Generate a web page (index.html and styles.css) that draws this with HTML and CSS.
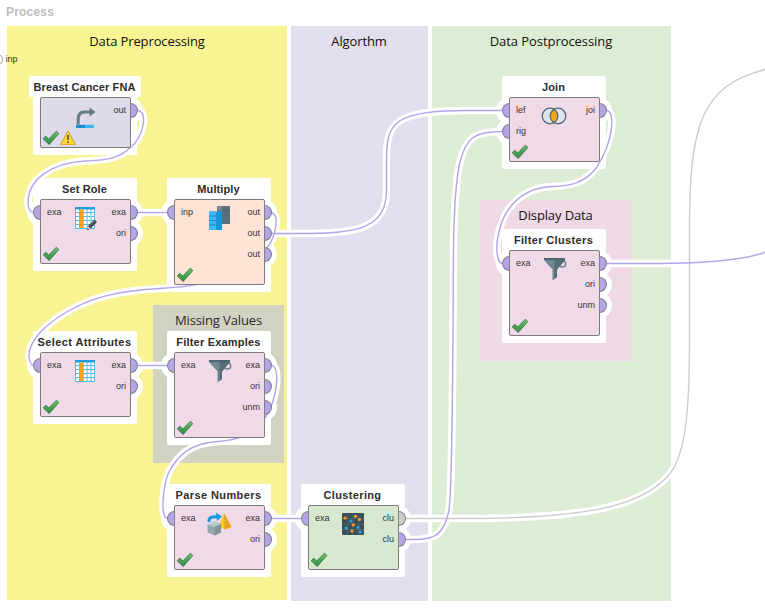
FILE: index.html
```
<!DOCTYPE html>
<html lang="en">
<head>
<meta charset="utf-8">
<title>Process</title>
<link rel="stylesheet" href="styles.css">
</head>
<body>
<header class="title">Process</header>
<main class="columns">
  <section class="column pre"><h2>Data Preprocessing</h2></section>
  <section class="column algo"><h2>Algorthm</h2></section>
  <section class="column post"><h2>Data Postprocessing</h2></section>
</main>
<section class="note missing"><h2>Missing Values</h2></section>
<section class="note display"><h2>Display Data</h2></section>
<svg class="wires" width="765" height="613" viewBox="0 0 765 613" id="wires">
  <defs>
    <g id="connections">
      <path d="M138 110.500C148 112 144 136 130 148C117 160 103 160 85 161C50 163 28 180 28 203C28 208 30 212 33 212.500"/>
      <path d="M138 212.500H167"/>
      <path d="M271 212.500C280 214 276 236 267 248C247 274 220 285 160 288.500C120 291 96 296 72 309C48 322 28 340 29 357C30 363 31 365 33 365.500"/>
      <path d="M272 233.500H290C350 233.500 386.500 233 386.500 190V160C386.500 122 394 110.500 470 110.500H502"/>
      <path d="M138 365.500H167"/>
      <path d="M272 365.500C280 367 278 398 265 418C254 434 240 440 218 441.500C190 443 178 456 169.500 471C163 484 160 516 167 518.500"/>
      <path d="M272 518.500H301"/>
      <path class="idle" d="M406 518.500H480C585 517 640 507 668 476C686 456 689.500 410 689.500 340V230C689.500 125 701 86 765 69.500"/>
      <path d="M406 539.500C432 539.500 443 539 449 510C453 485 453 300 453.500 250C454 205 457 175 460 162C466 138 474 131.500 502 131.500"/>
      <path d="M607 110.500C615 112 614 140 597 167C585 183 570 186 553 186.500C532 187 518 196 508 210C500 222 496 240 497 252C498 260 499 263 502 263.500"/>
      <path d="M607 263.500H640C700 263.500 740 261 765 252.500"/>
    </g>
    <linearGradient id="tick" x1="0" y1="0" x2="0" y2="1"><stop offset="0" stop-color="#6cc472"/><stop offset="1" stop-color="#2f8b42"/></linearGradient>
    <symbol id="check" viewBox="0 0 18 16"><path d="M1.200 8.800L3.800 6.200L6.800 9L14.400 1.200L16.800 3.500L7.200 14.500Z" fill="url(#tick)" stroke="#30783c" stroke-width=".9"/></symbol>
    <symbol id="warning" viewBox="0 0 18 16"><path d="M9 1.200L16.500 14.500H1.500Z" fill="#fbd63a" stroke="#dca72e" stroke-width="1.200" stroke-linejoin="round"/><path d="M9 5V10M9 11.500V13" stroke="#4b4a3b" stroke-width="1.500"/></symbol>
    <symbol id="retrieve" viewBox="0 0 24 24"><path d="M4.200 20.500V15.500Q4.200 8 10.500 8H16" fill="none" stroke="#657b85" stroke-width="3"/><path d="M15.500 3.500L21.500 8L15.500 12.500Z" fill="#657b85"/><path d="M2 20.800H11V24H2Z" fill="#1a8ed4"/><path d="M11 20.800H20V24H11Z" fill="#3db5ef"/></symbol>
    <symbol id="table" viewBox="0 0 24 24"><path d="M1 1H21V23H1Z" fill="#fff"/><path d="M1.500 3V22.500H20.500V3M1 6.500H21M1 10.500H21M1 14.500H21M1 18.500H21M5.500 3V23M9 3V23M13 3V23M17 3V23" fill="none" stroke="#55baea"/><path d="M1 1H21V3.500H1Z" fill="#229fdc"/><path d="M5 3.500H9.500V22H5Z" fill="#ffa51d"/><path d="M5 7H9.500M5 11H9.500M5 15H9.500M5 19H9.500" stroke="#ee9315"/></symbol>
    <symbol id="role" viewBox="0 0 24 24"><use href="#table"/><path d="M13 24L14 20L20.500 13.500L23 16L16.500 22.500Z" fill="#3c444c"/><path d="M13 24L14 20L16.500 22.500Z" fill="#e5c8cd"/><path d="M13 24L14 22.500L15 23.500Z" fill="#222"/><path d="M16 19.500L20.500 15" stroke="#7b8185"/></symbol>
    <symbol id="copy" viewBox="0 0 24 24"><path d="M9 0H22V18H9Z" fill="#5c707c"/><path d="M9 0H14V18H9Z" fill="#788b95"/><path d="M9 4.500H22M9 9H22M9 13.500H22" stroke="#506570" stroke-width=".7"/><path d="M1 5.500H14V24H1Z" fill="#1695d9"/><path d="M1 5.500H8V24H1Z" fill="#3fb9f1"/><path d="M1 10H8M1 14.500H8M1 19H8" stroke="#1682bf" stroke-width=".8"/></symbol>
    <symbol id="filter" viewBox="0 0 24 24"><ellipse cx="19.500" cy="7" rx="3.200" ry="3" fill="none" stroke="#6d8590" stroke-width="1.500"/><path d="M1 1H22V3L14 12.500V20L9.500 23.500V12.500L1 3Z" fill="#718791"/><path d="M11.500 3H22L14 12.500V20L11.500 22Z" fill="#566d79"/><path d="M1 1H22V3H1Z" fill="#4e6470"/></symbol>
    <symbol id="parse" viewBox="0 0 26 24"><path d="M18 1L25.500 15L18.500 17.500L12.500 14Z" fill="#fbc831"/><path d="M18 1L25.500 15L18.500 17.500Z" fill="#e9a624"/><path d="M3 10V8Q4 4 12 5" fill="none" stroke="#1699dc" stroke-width="3"/><path d="M10 .5L16 4.500L11 9Z" fill="#1699dc"/><path d="M1.500 12.500L9 9.500L15 12V20.500L8.500 23.500L1.500 20.500Z" fill="#96a8ae"/><path d="M1.500 12.500L9 9.500L15 12L8.500 15Z" fill="#bacbd0"/><path d="M8.500 15L15 12V20.500L8.500 23.500Z" fill="#81959d"/></symbol>
    <symbol id="cluster" viewBox="0 0 24 24"><rect x="1" y="1" width="22" height="22" rx="1" fill="#3a4e59"/><path d="M1 6.500H23M1 12H23M1 17.500H23M6.500 1V23M12 1V23M17.500 1V23" stroke="#4a606b"/><g fill="#ff9d22"><circle cx="4" cy="6" r="1.600"/><circle cx="14.500" cy="4.300" r="1.600"/><circle cx="18.500" cy="7.500" r="1.600"/><circle cx="12.300" cy="12.800" r="1.600"/><circle cx="11" cy="19" r="1.600"/></g><g fill="#27a6e9"><circle cx="10" cy="9" r="1.600"/><circle cx="5.200" cy="16" r="1.600"/><circle cx="17" cy="15.500" r="1.600"/><circle cx="19.300" cy="20" r="1.600"/></g></symbol>
    <symbol id="join" viewBox="0 0 26 20"><circle cx="9" cy="10" r="7.500" fill="#dce6ea"/><circle cx="17" cy="10" r="7.500" fill="#dce6ea"/><path d="M13 3.600A7.500 7.500 0 0 1 13 16.400A7.500 7.500 0 0 1 13 3.600" fill="#ffa414"/><g fill="none" stroke="#526a76" stroke-width="1.300"><circle cx="9" cy="10" r="7.800"/><circle cx="17" cy="10" r="7.800"/></g></symbol>
  </defs>
  <g id="plates" fill="#fff"></g>
  <use class="halo" href="#connections"/>
  <use class="wire" href="#connections"/>
  <circle cx="-2" cy="59.500" r="4.700" fill="#fff" stroke="#b5b5b5" stroke-width="1.300"/>
</svg>
<span class="source">inp</span>
<div id="nodes"></div>
<script src="nodes.js"></script>
</body>
</html>
```
FILE: styles.css
```
* { box-sizing: border-box; }
body {
  position: relative;
  margin: 0;
  width: 765px;
  height: 613px;
  overflow: hidden;
  background: #fff;
  font-family: "Liberation Sans", Arial, sans-serif;
}
.title {
  height: 26px;
  padding: 4px 0 0 6px;
  font-size: 12px;
  line-height: 16px;
  font-weight: bold;
  letter-spacing: .2px;
  color: #bcbcbc;
}
.columns {
  display: flex;
  gap: 4px;
  padding-left: 7px;
}
.column { height: 575px; padding-top: 6px; }
.pre { width: 280px; height: 574px; background: #f8f494; }
.algo { width: 137px; padding-right: 1px; background: #e2deee; }
.post { width: 239px; padding-right: 1px; background: #dcecd5; }
h2 {
  margin: 0;
  font: 400 13px/18px "Open Sans", "Noto Sans", sans-serif;
  letter-spacing: -.12px;
  text-align: center;
  color: #111;
}
.post h2 { letter-spacing: -.06px; }
.note { position: absolute; padding-top: 6px; }
.missing { left: 153px; top: 305px; width: 131px; height: 158px; background: #d1d2c2; }
.missing h2 { color: #2a2a2a; }
.display { left: 479px; top: 200px; width: 153px; height: 161px; background: #efd9e4; }
.wires { position: absolute; left: 0; top: 0; }
.halo { --idle: #fff; fill: none; stroke: #fff; stroke-width: 7.5; }
.wire { --idle: #ccc; fill: none; stroke: #b4a4e9; stroke-width: 1.4; }
.idle { stroke: var(--idle); }
.source {
  position: absolute;
  left: 5.5px;
  top: 53px;
  font-size: 9px;
  line-height: 12px;
  color: #333;
}
.node { position: absolute; width: 91px; }
.name {
  position: absolute;
  left: -12px;
  right: -10px;
  top: -17px;
  font-size: 11px;
  line-height: 15px;
  font-weight: bold;
  text-align: center;
  white-space: nowrap;
  color: #2c2c2c;
}
.box {
  height: 100%;
  border: 1px solid #7e7b80;
  border-radius: 2px;
  background: #f1dae7;
}
.violet { background: #dedaea; }
.peach { background: #fee4d7; }
.green { background: #d8e8cf; }
.ports {
  position: absolute;
  top: 3px;
  display: flex;
  flex-direction: column;
  font-size: 9px;
  line-height: 21px;
  color: #333;
}
.in { left: -7px; }
.out { right: -7px; text-align: right; }
.port { display: flex; align-items: center; gap: 6px; height: 21px; }
.out .port { flex-direction: row-reverse; gap: 4px; }
.port i {
  width: 8px;
  height: 15px;
  border: 1.5px solid #858087;
  background: #b4a4e8;
}
.in i { border-radius: 8px 0 0 8px; }
.out i { border-radius: 0 8px 8px 0; }
.port .unused { background: #ccc; }
.icon { position: absolute; left: 34px; top: 7px; }
.icon.cluster { left: 33px; }
.icon.parse { left: 32px; }
.icon.filter { left: 33.5px; }
.icon.join { left: 32px; top: 9px; }
.status { position: absolute; left: 2px; bottom: 2px; display: flex; }
.status svg + svg { margin-left: -1px; }
```
FILE: nodes.js
```
const NODES = [
  { name: "Breast Cancer FNA", spacing: 0.1, x: 40, y: 97, h: 51, tint: "violet", icon: "retrieve", in: [], out: ["out"], warn: true },
  { name: "Set Role", spacing: 0.12, x: 40, y: 199, h: 65, icon: "role", in: ["exa"], out: ["exa", "ori"] },
  { name: "Multiply", spacing: 0.1, x: 174, y: 199, h: 86, tint: "peach", icon: "copy", in: ["inp"], out: ["out", "out", "out"] },
  { name: "Select Attributes", spacing: 0.4, x: 40, y: 352, h: 65, icon: "table", in: ["exa"], out: ["exa", "ori"] },
  { name: "Filter Examples", spacing: 0.2, x: 174, y: 352, h: 86, icon: "filter", in: ["exa"], out: ["exa", "ori", "unm"] },
  { name: "Parse Numbers", spacing: 0.4, x: 174, y: 505, h: 65, icon: "parse", in: ["exa"], out: ["exa", "ori"] },
  { name: "Clustering", spacing: 0.35, x: 308, y: 505, h: 65, tint: "green", icon: "cluster", in: ["exa"], out: ["clu", "clu"], unused: true },
  { name: "Join", spacing: 0.12, x: 509, y: 97, h: 65, icon: "join", in: ["lef", "rig"], out: ["joi"] },
  { name: "Filter Clusters", spacing: 0.35, x: 509, y: 250, h: 86, icon: "filter", in: ["exa"], out: ["exa", "ori", "unm"] }
];

const ports = (labels, side, unused) =>
  `<div class="ports ${side}">` + labels.map((label, i) =>
    `<div class="port"><i${unused && i === 0 ? ' class="unused"' : ""}></i><span>${label}</span></div>`).join("") + "</div>";

const glyph = (id, w, h) => `<svg width="${w}" height="${h}"><use href="#${id}"/></svg>`;

let plates = "";
let html = "";
for (const n of NODES) {
  plates += `<rect x="${n.x - 7}" y="${n.y - 21}" width="104" height="${n.h + 28}" rx="2"/>`;
  if (n.warn) plates += `<rect x="${n.x - 11}" y="${n.y - 21}" width="112" height="21" rx="2"/>`;
  n.in.forEach((_, i) => { plates += `<circle cx="${n.x}" cy="${n.y + 13.5 + 21 * i}" r="13"/>`; });
  n.out.forEach((_, i) => { plates += `<circle cx="${n.x + 90}" cy="${n.y + 13.5 + 21 * i}" r="13"/>`; });
  const size = n.icon === "parse" || n.icon === "join" ? [26, n.icon === "join" ? 20 : 24] : [24, 24];
  html += `<div class="node" style="left:${n.x}px;top:${n.y}px;height:${n.h}px">
    <div class="name" style="letter-spacing:${n.spacing}px">${n.name}</div>
    <div class="box ${n.tint || ""}"></div>
    <div class="icon ${n.icon}">${glyph(n.icon, size[0], size[1])}</div>
    ${ports(n.in, "in")}${ports(n.out, "out", n.unused)}
    <div class="status">${glyph("check", 18, 16)}${n.warn ? glyph("warning", 18, 16) : ""}</div>
  </div>`;
}
document.getElementById("plates").innerHTML = plates;
document.getElementById("nodes").innerHTML = html;
```
